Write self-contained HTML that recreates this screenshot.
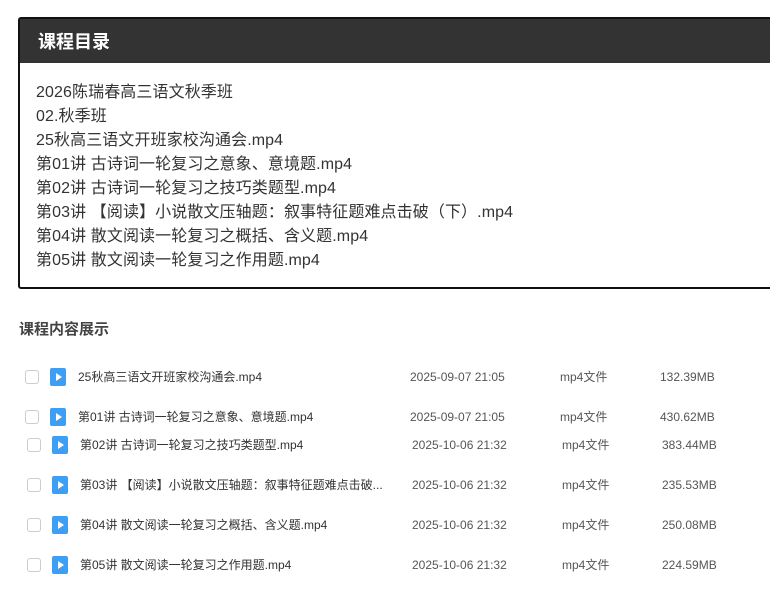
<!DOCTYPE html>
<html><head><meta charset="utf-8"><style>
*{margin:0;padding:0;box-sizing:border-box}
body{width:770px;height:592px;background:#fff;font-family:"Liberation Sans","Noto Sans CJK SC",sans-serif;position:relative;overflow:hidden;color:#333}
.box{position:absolute;left:18px;top:17px;width:770px;height:272px;border:2px solid #111;border-radius:3px}
.hd{height:44px;background:#333;color:#fff;font-size:18px;font-weight:bold;line-height:46px;padding-left:18px}
.list{padding:18px 0 0 16px;font-size:16px;line-height:24px;color:#333;letter-spacing:0.1px}
.t{position:absolute;left:19px;top:318px;font-size:15px;font-weight:bold;color:#444}
.r{position:absolute;height:20px;font-size:12px;color:#333;line-height:20px;width:770px}
.r span{position:absolute;top:0;white-space:nowrap}
.cb{position:absolute;left:6px;top:3px;width:14px;height:14px;border:1px solid #ccc;border-radius:3px}
.ic{position:absolute;left:31px;top:1px;width:16px;height:18px;background:#3c9ff5;border-radius:2px}
.ic:after{content:"";position:absolute;left:6px;top:5px;border-left:6px solid #fff;border-top:4px solid transparent;border-bottom:4px solid transparent}
.d,.y,.s{color:#555}
</style></head><body>
<div class="box"><div class="hd">课程目录</div>
<div class="list">2026陈瑞春高三语文秋季班<br>02.秋季班<br>25秋高三语文开班家校沟通会.mp4<br>第01讲 古诗词一轮复习之意象、意境题.mp4<br>第02讲 古诗词一轮复习之技巧类题型.mp4<br>第03讲 【阅读】小说散文压轴题：叙事特征题难点击破（下）.mp4<br>第04讲 散文阅读一轮复习之概括、含义题.mp4<br>第05讲 散文阅读一轮复习之作用题.mp4</div></div>
<div class="t">课程内容展示</div>
<div class="r" style="left:19px;top:367px"><i class="cb"></i><i class="ic"></i><span style="left:59px">25秋高三语文开班家校沟通会.mp4</span><span class="d" style="left:391px">2025-09-07 21:05</span><span class="y" style="left:541px">mp4文件</span><span class="s" style="left:641px">132.39MB</span></div>
<div class="r" style="left:19px;top:407px"><i class="cb"></i><i class="ic"></i><span style="left:59px">第01讲 古诗词一轮复习之意象、意境题.mp4</span><span class="d" style="left:391px">2025-09-07 21:05</span><span class="y" style="left:541px">mp4文件</span><span class="s" style="left:641px">430.62MB</span></div>
<div class="r" style="left:21px;top:435px"><i class="cb"></i><i class="ic"></i><span style="left:59px">第02讲 古诗词一轮复习之技巧类题型.mp4</span><span class="d" style="left:391px">2025-10-06 21:32</span><span class="y" style="left:541px">mp4文件</span><span class="s" style="left:641px">383.44MB</span></div>
<div class="r" style="left:21px;top:475px"><i class="cb"></i><i class="ic"></i><span style="left:59px">第03讲 【阅读】小说散文压轴题：叙事特征题难点击破...</span><span class="d" style="left:391px">2025-10-06 21:32</span><span class="y" style="left:541px">mp4文件</span><span class="s" style="left:641px">235.53MB</span></div>
<div class="r" style="left:21px;top:515px"><i class="cb"></i><i class="ic"></i><span style="left:59px">第04讲 散文阅读一轮复习之概括、含义题.mp4</span><span class="d" style="left:391px">2025-10-06 21:32</span><span class="y" style="left:541px">mp4文件</span><span class="s" style="left:641px">250.08MB</span></div>
<div class="r" style="left:21px;top:555px"><i class="cb"></i><i class="ic"></i><span style="left:59px">第05讲 散文阅读一轮复习之作用题.mp4</span><span class="d" style="left:391px">2025-10-06 21:32</span><span class="y" style="left:541px">mp4文件</span><span class="s" style="left:641px">224.59MB</span></div>
</body></html>
